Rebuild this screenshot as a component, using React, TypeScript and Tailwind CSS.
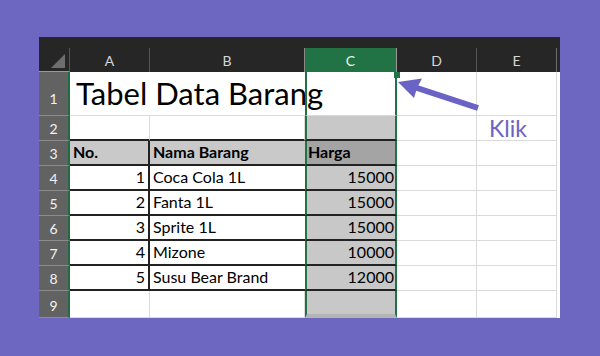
import React from "react";

const COLS = "grid grid-cols-[31px_80px_155px_92px_80px_80px_3px]";
const FONT = { fontFamily: "Lato, 'Open Sans', 'Liberation Sans', sans-serif" };

const data: [number, string, number][] = [
  [1, "Coca Cola 1L", 15000],
  [2, "Fanta 1L", 15000],
  [3, "Sprite 1L", 15000],
  [4, "Mizone", 10000],
  [5, "Susu Bear Brand", 12000],
];

function RowHead({ n, big }: { n: number; big?: boolean }) {
  return (
    <div
      className={
        "flex justify-center items-end bg-[#626262] text-[#f2f2f2] text-[14px] leading-[16px] border-b border-b-[#8c8c8c] border-r-2 border-r-[#1f6e43] " +
        (big ? "pb-[8px]" : "pb-[3px]")
      }
    >
      {n}
    </div>
  );
}

const GRID = "border-r border-b border-r-[#dadada] border-b-[#dadada]";
const CELLTXT = "flex items-end pb-[2px] text-[16px] leading-[20px] text-black whitespace-nowrap";

export default function App() {
  return (
    <div className="relative w-[600px] h-[356px] bg-[#6d67c1] pt-[37px] pl-[39px]" style={FONT}>
      <div className="w-[521px] h-[281px] bg-white flex flex-col overflow-hidden">
        {/* top bar */}
        <div className="h-[11px] bg-[#262626]" />
        {/* column header */}
        <div className={`${COLS} h-[24px] bg-[#262626] text-[14px] text-[#d6d6d6]`}>
          <div className="relative border-r border-r-[#555] border-b border-b-[#9a9a9a]">
            <svg className="absolute left-0 top-0" width="31" height="24">
              <polygon points="12,20 26,20 26,6" fill="#6e6e6e" />
            </svg>
          </div>
          <div className="flex items-center justify-center border-r border-r-[#555]">A</div>
          <div className="flex items-center justify-center border-r border-r-[#8a8a8a]">B</div>
          <div className="flex items-center justify-center bg-[#217346] text-[#eef5f0] border-r border-r-[#9a9a9a]">C</div>
          <div className="flex items-center justify-center border-r border-r-[#555]">D</div>
          <div className="flex items-center justify-center border-r border-r-[#6a6a6a]">E</div>
          <div />
        </div>

        {/* row 1 */}
        <div className={`${COLS} h-[44px]`}>
          <RowHead n={1} big />
          <div className="flex items-end pb-[3px] pl-[6px] border-b border-b-[#dadada] text-[31px] leading-[37px] text-black whitespace-nowrap">
            Tabel Data Barang
          </div>
          <div className="border-b border-b-[#dadada]" />
          <div className="border-x-2 border-x-[#217346] border-b border-b-[#dadada]" />
          <div className={GRID} />
          <div className={GRID} />
          <div />
        </div>

        {/* row 2 */}
        <div className={`${COLS} h-[25px]`}>
          <RowHead n={2} />
          <div className="border-r border-r-[#dadada] border-b-2 border-b-[#222]" />
          <div className="border-r border-r-[#dadada] border-b-2 border-b-[#222]" />
          <div className="bg-[#c8c8c8] border-x-2 border-x-[#217346] border-b-2 border-b-[#222]" />
          <div className={GRID} />
          <div className={`${GRID} pl-[12px] text-[23px] leading-[24px] text-[#6a63c2] whitespace-nowrap`}>Klik</div>
          <div />
        </div>

        {/* row 3 */}
        <div className={`${COLS} h-[25px]`}>
          <RowHead n={3} />
          <div className={`${CELLTXT} font-bold pl-[3px] bg-[#c9c9c9] border-r-2 border-r-[#222] border-b-2 border-b-[#222]`}>No.</div>
          <div className={`${CELLTXT} font-bold pl-[3px] bg-[#c9c9c9] border-b-2 border-b-[#222]`}>Nama Barang</div>
          <div className={`${CELLTXT} font-bold pl-[1px] bg-[#a4a4a4] border-x-2 border-x-[#217346] border-b-2 border-b-[#222]`}>Harga</div>
          <div className={GRID} />
          <div className={GRID} />
          <div />
        </div>

        {data.map(([no, name, price], i) => (
          <div key={no} className={`${COLS} h-[25px]`}>
            <RowHead n={i + 4} />
            <div className={`${CELLTXT} justify-end pr-[3px] border-r-2 border-r-[#222] border-b-2 border-b-[#222]`}>{no}</div>
            <div className={`${CELLTXT} pl-[3px] border-b-2 border-b-[#222]`}>{name}</div>
            <div className={`${CELLTXT} justify-end pr-[1px] bg-[#c8c8c8] border-x-2 border-x-[#217346] border-b-2 border-b-[#222]`}>{price}</div>
            <div className={GRID} />
            <div className={GRID} />
            <div />
          </div>
        ))}

        {/* row 9 */}
        <div className={`${COLS} h-[27px]`}>
          <RowHead n={9} />
          <div className={GRID} />
          <div className={GRID} />
          <div className="bg-[#c8c8c8] border-x-2 border-x-[#217346] border-b-4 border-b-[#b4b4b4]" />
          <div className={GRID} />
          <div className={GRID} />
          <div />
        </div>
      </div>

      {/* fill handle */}
      <div className="absolute left-[394px] top-[72px] w-[6px] h-[6px] bg-[#217346]" />

      {/* arrow */}
      <svg className="absolute left-0 top-0 pointer-events-none" width="600" height="356">
        <line x1="414" y1="87" x2="478" y2="108" stroke="#6a62c5" strokeWidth="6" />
        <polygon points="398,82 422,78.5 417,88 414,98" fill="#6a62c5" />
      </svg>
    </div>
  );
}
